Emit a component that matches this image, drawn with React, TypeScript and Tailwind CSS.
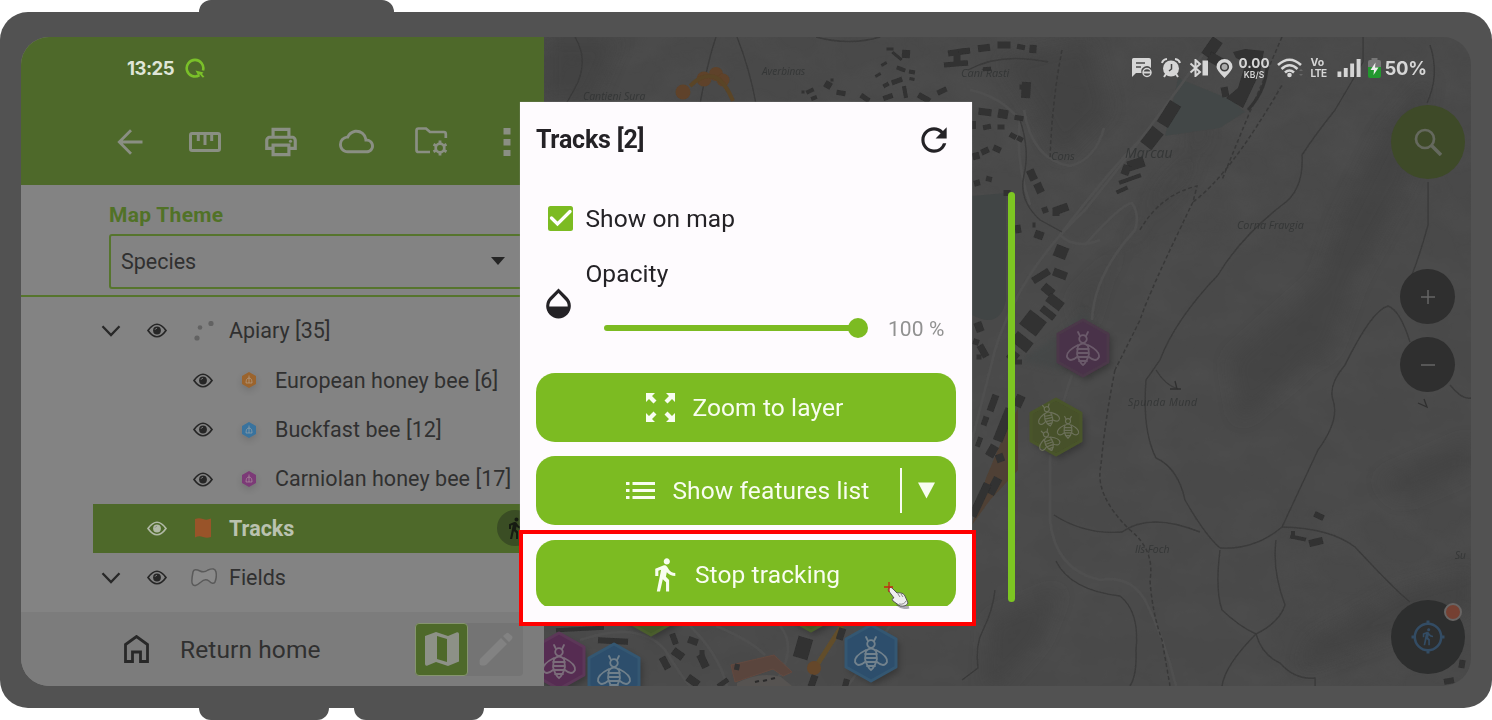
import type { ReactNode } from 'react';
import { MdCloudQueue, MdDirectionsWalk, MdOpacity, MdOutlinePrint, MdRefresh } from 'react-icons/md';

type Block = [number, number, number, number, number];

const buildings: Block[] = [
  [959, 52, 22, 6, -8], [956, 64, 24, 5, -5], [957, 58, 7, 8, 0], [906, 54, 8, 8, 5], [890, 49, 7, 3, 0],
  [897, 56, 12, 3, 40], [884, 64, 6, 3, -30], [878, 75, 6, 3, -30], [901, 69, 9, 4, 20], [897, 81, 11, 5, -20],
  [912, 72, 6, 4, 10], [886, 85, 6, 4, -30], [888, 97, 10, 5, -20], [905, 92, 4, 12, -10], [924, 98, 13, 6, 30],
  [942, 91, 10, 5, -25], [912, 79, 5, 3, 10], [828, 85, 7, 7, 30], [841, 93, 9, 5, 10], [810, 91, 8, 4, -25],
  [814, 98, 6, 4, -20], [865, 98, 10, 5, 35], [832, 80, 3, 3, 0], [803, 92, 3, 3, 0],
  [964, 51, 12, 5, -5], [963, 63, 9, 5, 0], [984, 48, 12, 7, -8], [1004, 45, 13, 7, 0], [1021, 47, 8, 5, 10],
  [1033, 49, 7, 8, 5], [987, 69, 8, 4, -5], [1026, 90, 9, 16, 3], [1022, 87, 5, 5, 0], [985, 112, 13, 7, 6],
  [1003, 114, 10, 9, 10], [1019, 118, 9, 5, 10], [987, 127, 8, 5, -10], [1001, 127, 7, 5, 0], [974, 125, 4, 8, 0],
  [1013, 136, 7, 5, 30], [1020, 139, 6, 5, 30], [976, 156, 7, 7, -15], [985, 151, 8, 6, -25], [997, 149, 8, 6, 25],
  [977, 183, 6, 6, -15], [989, 179, 6, 5, 15], [1032, 175, 8, 11, -25], [1039, 188, 8, 10, -25],
  [1045, 210, 6, 6, -20], [1061, 209, 15, 8, -20], [1056, 212, 7, 8, 0], [1018, 229, 6, 8, -10], [1039, 235, 9, 8, 20],
  [1034, 225, 3, 5, 0], [1007, 193, 7, 6, 0], [1061, 252, 13, 12, 22], [1041, 276, 19, 7, -32], [1060, 274, 14, 8, 20],
  [1048, 290, 12, 9, 40], [1055, 302, 17, 10, 38], [1048, 313, 16, 7, 38], [1033, 323, 21, 18, 38], [1022, 342, 20, 12, 38],
  [1013, 356, 10, 10, 38], [1169, 114, 13, 25, 32], [1152, 138, 14, 20, 38], [1136, 164, 17, 10, -18],
  [1130, 179, 23, 4, -20], [1122, 190, 12, 4, -25], [1126, 170, 8, 10, 20], [1212, 48, 12, 20, 35], [1216, 60, 16, 10, 30],
  [1225, 92, 7, 10, -10], [979, 327, 8, 10, -20], [976, 342, 6, 6, 20], [983, 351, 7, 13, -30], [979, 357, 5, 5, 0],
  [993, 403, 7, 17, 20], [985, 421, 6, 9, 20], [979, 442, 5, 10, 20], [1019, 401, 9, 12, 25], [1004, 425, 10, 34, 22],
  [992, 451, 9, 12, 30], [1000, 458, 8, 8, -20], [994, 486, 9, 18, 28], [980, 500, 8, 36, 25], [1018, 362, 8, 5, 0],
  [613, 641, 30, 6, 3], [665, 663, 7, 13, -28], [678, 654, 12, 8, 35], [693, 641, 10, 7, 20], [674, 639, 6, 11, -20],
  [703, 661, 8, 14, -25], [693, 681, 13, 8, 35], [702, 653, 5, 6, 0], [803, 648, 15, 21, 16], [841, 634, 7, 12, 18],
  [723, 683, 12, 5, -35], [813, 681, 7, 12, 20], [846, 683, 6, 8, 15], [737, 667, 5, 6, 10], [580, 629, 48, 4, -3],
  [1319, 516, 10, 6, 25], [1298, 538, 16, 4, 12], [1293, 535, 4, 8, 0], [1316, 542, 14, 7, -14], [1462, 664, 6, 8, 10],
  [1449, 681, 10, 6, -10],
];

const roads = [
  'M575 37 Q590 62 574 90 L566 104', 'M700 104 Q708 60 716 37', 'M737 37 Q750 70 756 104', 'M968 70 Q1000 52 1048 62',
  'M816 37 Q850 46 880 37', 'M1020 120 Q1030 150 1024 175 Q1018 200 1040 220 L1062 232',
  'M1363 37 V62 Q1350 85 1335 110 Q1315 135 1302 155 Q1304 190 1282 205 Q1240 238 1218 275 Q1175 320 1160 360 L1146 380 Q1142 430 1156 458 Q1178 468 1185 500 Q1205 535 1220 548',
  'M1428 182 V225 Q1420 255 1410 280', 'M1430 45 Q1440 75 1427 103', 'M1220 548 Q1255 550 1282 527 L1318 450 Q1340 420 1333 400 Q1328 385 1345 365 Q1372 310 1388 306 Q1400 310 1410 342',
  'M1282 527 Q1330 528 1355 547 Q1395 590 1410 602', 'M1220 550 Q1215 590 1222 610 Q1240 627 1256 634 Q1262 655 1280 663 Q1295 680 1315 678 V686',
  'M1054 515 Q1085 535 1122 532 Q1150 512 1200 532', 'M1056 561 Q1070 590 1120 596 Q1140 612 1136 650 Q1137 675 1130 686',
  'M1256 634 Q1225 665 1222 686', 'M1276 540 Q1272 570 1285 605 Q1280 622 1256 634', 'M1450 385 Q1462 400 1471 398',
  'M1156 370 Q1165 385 1178 389', 'M995 590 Q993 610 983 630 Q975 645 978 668 L962 680',
];

const dotted = [
  'M1062 50 Q1052 100 1050 160', 'M1140 230 Q1160 195 1197 186 L1193 202 Q1230 175 1282 85',
  'M1115 370 Q1105 420 1101 465 Q1094 495 1130 530 Q1155 550 1150 580 Q1152 612 1162 640 L1170 686',
  'M1193 202 Q1150 290 1140 320 Q1125 350 1115 370', 'M1282 37 Q1250 110 1222 180',
];

const paleRoads = [
  'M1215 37 Q1150 130 1085 210 Q1020 270 995 350 Q985 390 972 440', 'M1100 240 Q1075 250 1060 235 Q1110 170 1140 140',
  'M1092 320 Q1094 275 1135 230 Q1140 215 1132 203 Q1120 205 1085 245', 'M1050 455 V520 Q1055 570 1100 580 Q1130 575 1145 600 Q1165 640 1176 686',
  'M1024 110 Q1032 160 1070 166 Q1095 160 1104 128', 'M970 90 Q1000 96 1020 120 Q1015 160 1030 205',
  'M580 640 Q640 620 665 650 Q690 690 695 690', 'M690 626 Q720 655 728 690', 'M780 626 Q800 650 770 690', 'M890 626 L845 690',
  'M716 626 Q750 640 765 655', 'M1072 375 Q1060 410 1050 450',
];

const shades = [
  'M1385 130 L1430 75 L1410 180 L1355 280 L1330 350 L1290 370 L1340 220 Z', 'M1140 230 L1160 190 L1205 140 L1200 100 L1190 170 L1140 225 L1100 280 L1085 330 L1075 300 Z',
  'M1000 60 L1090 40 L1110 110 L1060 160 L1040 120 Z', 'M990 620 L1060 590 L1040 640 L1000 686 L985 686 Z', 'M1310 640 L1400 590 L1471 570 L1471 610 L1380 640 L1300 670 Z',
  'M1380 480 L1471 440 L1471 470 L1400 500 Z', 'M544 37 H620 L590 104 H544 Z', 'M1230 360 L1320 280 L1300 370 L1240 420 Z',
];

function Bee({ x, y, s, r = 0 }: { x: number; y: number; s: number; r?: number }) {
  return (
    <g transform={`translate(${x} ${y}) rotate(${r}) scale(${s})`} fill="none" strokeWidth="1.8" strokeLinecap="round">
      <path d="M-5 -16 -3 -12 M5 -16 3 -12" />
      <circle cx="0" cy="-9" r="3.8" />
      <path d="M-5 -2 Q0 -7 5 -2 L6 6 Q4 14 0 17 Q-4 14 -6 6 Z M-6 1 H6 M-6 5 H6 M-5.5 9 H5.5 M-4 13 H4" />
      <path d="M-5 -3 Q-17 3 -16 9 Q-13 15 -6 9 M5 -3 Q17 3 16 9 Q13 15 6 9" />
    </g>
  );
}

function Hex({ x, y, fill, edge, line, many = false }: { x: number; y: number; fill: string; edge: string; line: string; many?: boolean }) {
  return (
    <g stroke={line}>
      <path transform={`translate(${x + 3} ${y + 4})`} d="M0 -28 25 -14 V14 L0 28 -25 14 V-14 Z" fill="#000" opacity=".25" stroke="none" filter="url(#soft)" />
      <path transform={`translate(${x} ${y})`} d="M0 -28 25 -14 V14 L0 28 -25 14 V-14 Z" fill={fill} stroke={edge} strokeWidth="3" strokeLinejoin="round" />
      {many ? (
        <>
          <Bee x={x - 8} y={y - 12} s={0.66} r={-12} />
          <Bee x={x + 12} y={y} s={0.66} />
          <Bee x={x - 8} y={y + 13} s={0.66} r={-20} />
        </>
      ) : (
        <Bee x={x} y={y} s={1} />
      )}
    </g>
  );
}

function MapCanvas() {
  return (
    <svg className="block h-full w-full" viewBox="544 37 927 649">
      <defs>
        <filter id="soft" x="-30%" y="-30%" width="160%" height="160%"><feGaussianBlur stdDeviation="3" /></filter>
        <filter id="haze" x="-30%" y="-30%" width="160%" height="160%"><feGaussianBlur stdDeviation="9" /></filter>
        <filter id="edge"><feGaussianBlur stdDeviation="0.6" /></filter>
        <filter id="relief" x="0" y="0" width="100%" height="100%">
          <feTurbulence type="fractalNoise" baseFrequency="0.022 0.03" numOctaves="4" seed="7" />
          <feColorMatrix values="0 0 0 0 0.12  0 0 0 0 0.12  0 0 0 0 0.12  1.1 0 0 0 -0.38" />
        </filter>
      </defs>
      <rect x="544" y="37" width="927" height="649" fill="#494949" />
      <rect x="544" y="37" width="927" height="649" filter="url(#relief)" opacity=".28" />
      <g fill="#3d3d3d" opacity=".45" filter="url(#haze)">{shades.map((d) => <path key={d} d={d} />)}</g>
      <path d="M972 196 L1006 193 V300 Q1000 330 972 315 Z" fill="#414545" />
      <path d="M1178 78 L1232 100 L1245 112 L1220 128 L1165 136 Z" fill="#434746" filter="url(#edge)" />
      <path d="M1020 360 Q1070 330 1082 310 L1092 320 L1060 370 Z" fill="#3f4544" opacity=".5" filter="url(#soft)" />
      <g fill="none" stroke="#4f4f4f" strokeWidth="2.6" filter="url(#edge)">{paleRoads.map((d) => <path key={d} d={d} />)}</g>
      <g fill="none" stroke="#3a3a3a" strokeWidth="1.4" filter="url(#edge)">{roads.map((d) => <path key={d} d={d} />)}</g>
      <g fill="none" stroke="#383838" strokeWidth="1.5" strokeDasharray="4 2.5" filter="url(#edge)">{dotted.map((d) => <path key={d} d={d} />)}</g>
      <g filter="url(#edge)">
        <g fill="#5e4229">
          <circle cx="683" cy="92" r="7.5" />
          <circle cx="704" cy="79" r="7.5" />
          <circle cx="716" cy="74" r="7" />
          <circle cx="723" cy="80" r="6.5" />
        </g>
        <path d="M690 86 Q716 60 733 101" fill="none" stroke="#5a4428" strokeWidth="4" />
        <path d="M972 525 L986 478 L1002 440 L1018 408 L1018 470 L990 500 Z" fill="#4f4034" />
        <path d="M842 626 L815 668" stroke="#624e2a" strokeWidth="5" />
        <circle cx="814" cy="668" r="7" fill="#65472a" />
        <path d="M731 665 L774 655 L792 672 L783 676 L773 669 L735 682 Z" fill="#5a453e" stroke="#63493f" />
        <path d="M737 683 Q760 671 781 677 L792 686 H737 Z" fill="#565351" />
        <path d="M755 682 l4 -1 m4 0 l4 -1 m4 -1 l4 -1" stroke="#2a2a2a" strokeWidth="2" />
        <g fill="#303030">
          {buildings.map(([x, y, w, h, a], i) => (
            <rect key={i} x={x - w / 2} y={y - h / 2} width={w} height={h} transform={`rotate(${a} ${x} ${y})`} />
          ))}
          <path d="M1233 52 L1245 49 L1264 51 L1260 72 L1243 108 L1226 98 L1238 88 L1246 62 L1236 58 Z" />
        </g>
        <path d="M1267 62 Q1268 88 1248 110" fill="none" stroke="#333" strokeWidth="3" />
      </g>
      <g fill="#303232" fontFamily="'Open Sans', sans-serif" fontStyle="italic" fontSize="11" fillOpacity=".8">
        <text x="1051" y="160">Cons</text>
        <text x="1125" y="158" fontSize="14">Marcau</text>
        <text x="1237" y="229" fontSize="10.8">Corna Fravgia</text>
        <text x="1128" y="406" fontSize="10.5" letterSpacing=".4">Spunda Mund</text>
        <text x="1135" y="553" fontSize="10.5">Ils Foch</text>
        <text x="762" y="75" fontSize="10">Averbinas</text>
        <text x="961" y="77" fontSize="11">Cani Rasti</text>
        <text x="583" y="100" fontSize="10.5">Cantieni Sura</text>
        <text x="1455" y="559" fontSize="10">Su</text>
      </g>
      <path d="M1170 389 h11 m-6 -8 l2 8 M1418 403 l9 4 l-3 -8" stroke="#303030" fill="none" strokeWidth="1.3" />
      <g filter="url(#edge)">
        <Hex x={1083} y={348} fill="#493248" edge="#4b3749" line="#6b5a6b" />
        <Hex x={1056} y={427} fill="#465129" edge="#4a552b" line="#6c705a" many />
      </g>
      <Hex x={559} y={661} fill="#562c52" edge="#5c3758" line="#7b6c7a" />
      <Hex x={614} y={672} fill="#2d4e6c" edge="#345772" line="#70808b" />
      <Hex x={871} y={653} fill="#2d4e6c" edge="#345772" line="#72828d" />
      <Hex x={651} y={607} fill="#455829" edge="#4a5d2c" line="#75795f" />
      <Hex x={811} y={603} fill="#455829" edge="#4a5d2c" line="#75795f" />
    </svg>
  );
}

function Eye({ light = false }: { light?: boolean }) {
  return (
    <svg className={light ? 'h-[15px] w-5 text-[#b0b9a5]' : 'h-[15px] w-5 text-[#262626]'} viewBox="0 0 20 15" fill="none" stroke="currentColor">
      <path d="M1 7.5 Q10 -5 19 7.5 Q10 20 1 7.5 Z" strokeWidth="1.7" />
      <circle cx="10" cy="7.5" r="3.9" fill="currentColor" stroke="none" />
      <path d="M8 6.8 q.5-1.5 2-1.5" stroke="#888" strokeWidth=".8" />
    </svg>
  );
}

function Chevron() {
  return (
    <svg className="h-3 w-5" viewBox="0 0 20 12" fill="none" stroke="#282828" strokeWidth="2.3"><path d="M1.5 1.2 10 10 18.5 1.2" /></svg>
  );
}

function Swatch({ color }: { color: string }) {
  return (
    <svg className="h-5 w-5 drop-shadow-md" viewBox="0 0 20 20">
      <path d="M10 2 17 6 V14 L10 18 3 14 V6 Z" style={{ fill: color }} />
      <path d="M10 5.500 v2.500 M7 13 q0-5 3-5 t3 5 Z M10 8 v5" fill="none" stroke="#bdb5ae" strokeOpacity=".5" strokeWidth="1" />
    </svg>
  );
}

function GroupRow({ icon, label, labelClass }: { icon: ReactNode; label: string; labelClass: string }) {
  return (
    <div className="flex h-[49.4px] items-center pl-[80px]">
      <Chevron />
      <div className="ml-[26px] flex"><Eye /></div>
      <div className="ml-[22px] flex w-[30px] justify-center">{icon}</div>
      <span className={labelClass}>{label}</span>
    </div>
  );
}

function SpeciesRow({ color, label, labelClass }: { color: string; label: string; labelClass: string }) {
  return (
    <div className="flex h-[49.4px] items-center pl-[172px]">
      <Eye />
      <div className="ml-[26px] flex"><Swatch color={color} /></div>
      <span className={labelClass}>{label}</span>
    </div>
  );
}

function Tool({ children }: { children: ReactNode }) {
  return <div className="flex w-[75.5px] shrink-0 items-center justify-center text-[#8a8f83]">{children}</div>;
}

function SidePanel() {
  return (
    <aside className="flex h-full w-[523px] shrink-0 flex-col overflow-hidden bg-[#838383] text-[#303030]">
      <header className="flex h-[148px] shrink-0 flex-col bg-[#4e692a]">
        <div className="flex h-[62px] items-center pl-[106px]">
          <span className="w-[58px] font-['Inter'] text-[18.5px] leading-none font-bold tracking-[-0.5px] text-[#dfe5d8]">13:25</span>
          <svg className="h-5 w-5" viewBox="0 0 20 20" fill="none" stroke="#7ac029" strokeWidth="2.6">
            <path d="M14.5 17.200 A8.300 8.300 0 1 1 18 12.500" />
            <path d="M10.500 12.500 18.500 14.500 17 16 19.500 19 17.500 19.500 15 16.500 13 17 Z" fill="#7ac029" stroke="none" />
          </svg>
        </div>
        <div className="flex h-[87px] items-center pl-[71px]">
          <Tool>
            <svg className="h-[26px] w-[26px]" viewBox="0 0 26 26" fill="none" stroke="currentColor" strokeWidth="2.8"><path d="M25.500 13 H2.500 M14 1.300 2.300 13 14 24.700" /></svg>
          </Tool>
          <Tool>
            <svg className="h-[20px] w-[32px]" viewBox="0 0 32 20" fill="none" stroke="currentColor" strokeWidth="3"><rect x="1.500" y="1.500" width="29" height="17" rx="1.500" /><path d="M9.300 2 V9 M16 2 V13 M22.700 2 V9" /></svg>
          </Tool>
          <Tool><MdOutlinePrint className="h-[38px] w-[38px]" /></Tool>
          <Tool><MdCloudQueue className="h-[35px] w-[35px]" /></Tool>
          <Tool>
            <svg className="h-[29px] w-[33px]" viewBox="0 0 33 29" fill="none" stroke="currentColor" strokeWidth="2.700">
              <path d="M15 25 H3.500 Q1.500 25 1.500 23 V3.500 Q1.500 1.500 3.500 1.500 H11 L15 5 H29 Q30.800 5 30.800 7 V11" />
              <circle cx="25" cy="21" r="4.300" />
              <path d="M25 13.500 v3 M25 25.500 v3 M18.500 17.200 l2.600 1.500 M28.900 23.300 l2.600 1.500 M18.500 24.800 l2.600 -1.500 M28.900 18.700 l2.600 -1.500" strokeWidth="2.800" />
            </svg>
          </Tool>
          <Tool>
            <svg className="h-[28px] w-2" viewBox="0 0 8 28" fill="currentColor"><path d="M.5 0h7v6.500h-7zM.5 11h7v6.500h-7zM.5 22h7v6h-7z" /></svg>
          </Tool>
        </div>
      </header>
      <section className="h-[112px] shrink-0 border-b-2 border-[#56752d] pt-[20px] pl-[88px]">
        <div className="h-[28.5px] font-['Roboto'] text-[21px] leading-[20px] font-bold tracking-[0.3px] text-[#517227]">Map Theme</div>
        <div className="flex h-[55px] w-[460px] items-center rounded-[3px] border-2 border-[#56752d] pl-[10px]">
          <span className="w-[370px] pt-px font-['Roboto'] text-[21.5px] leading-none">Species</span>
          <svg className="h-2 w-[14px]" viewBox="0 0 14 8"><path d="M0 0H14L7 8Z" fill="#252525" /></svg>
        </div>
      </section>
      <div className="flex h-[315px] shrink-0 flex-col pt-[9.2px] font-['Roboto'] text-[21.5px] leading-none whitespace-nowrap">
        <GroupRow
          label="Apiary [35]"
          labelClass="ml-[10px]"
          icon={<svg className="h-5 w-[22px]" viewBox="0 0 22 20" fill="#626262"><circle cx="4" cy="17" r="2.600" /><circle cx="7" cy="6.500" r="2.300" /><circle cx="18" cy="2.500" r="2.600" /></svg>}
        />
        <SpeciesRow color="#9b642d" label="European honey bee [6]" labelClass="ml-[16px] tracking-[0.05px]" />
        <SpeciesRow color="#39739e" label="Buckfast bee [12]" labelClass="ml-[16px] tracking-[0.05px]" />
        <SpeciesRow color="#7c3a77" label="Carniolan honey bee [17]" labelClass="ml-[16px] tracking-[0.05px]" />
        <div className="ml-[72px] flex h-[49.4px] shrink-0 items-center bg-[#4e692a] pl-[54px] text-[#bac2b0]">
          <Eye light />
          <svg className="ml-[28px] h-5 w-4" viewBox="0 0 16 20"><path d="M0 1 Q4-.5 8 1 T16 .5 V19 Q12 20.500 8 19 T0 19.500 Z" fill="#995429" /></svg>
          <span className="ml-[18px] w-[268px] font-bold">Tracks</span>
          <div className="flex h-[36px] w-[36px] shrink-0 items-center justify-center rounded-full bg-[#3a4d24] text-[#161b12]"><MdDirectionsWalk className="h-6 w-6" /></div>
        </div>
        <GroupRow
          label="Fields"
          labelClass="ml-[10px]"
          icon={<svg className="h-[19px] w-[26px]" viewBox="0 0 26 19"><path d="M2 4 Q3 0 9 3 Q13 5 17 2 Q24-1 25 4 Q26 9 24 14 Q22 17 18 13 Q14 10 10 14 Q3 20 1.500 16 Q0 14 2 4 Z" fill="#8a8a8a" stroke="#5a5a5a" strokeWidth="1.500" /></svg>}
        />
      </div>
      <footer className="flex h-[74px] shrink-0 items-center bg-[#7c7c7c] pl-[103px]">
        <svg className="h-[28px] w-[25px]" viewBox="0 0 25 28" fill="none" stroke="#282828" strokeWidth="2.800"><path d="M1.500 26.500 V9.500 L12.500 1.500 23.500 9.500 V26.500 H16.500 V17 H8.500 V26.500 Z" /></svg>
        <span className="ml-[31px] w-[235px] pt-[3px] font-['Roboto'] text-[24.5px] leading-none tracking-[0.1px] whitespace-nowrap">Return home</span>
        <div className="flex h-[53px] rounded-[4px] bg-[#747474]">
          <div className="flex w-[53px] items-center justify-center rounded-[4px] border border-[#86956f] bg-[#4e692a]">
            <svg className="h-[34px] w-[34px]" viewBox="0 0 34 34" fill="#8d9187"><path d="M0 4 L11 0 L23 4 L32 .3 Q34 0 34 2 V29.500 L23 34 L11 30 L2 33.700 Q0 34 0 32 Z" /><path d="M12 4 22 7 V30 L12 27 Z" fill="#4e692a" /></svg>
          </div>
          <div className="flex w-[55px] items-center justify-center">
            <svg className="h-[34px] w-[34px]" viewBox="0 0 34 34" fill="#828282"><path d="M1 27 22 6 28 12 7 33 Q4 34 1 33 Q0 30 1 27 Z M24 4 27 1.500 Q28.500 0 30 1.500 L33 4 Q34 5.500 33 7 L30 10 Z" /></svg>
          </div>
        </div>
      </footer>
    </aside>
  );
}

function StatusIcons() {
  return (
    <div className="absolute top-[20px] right-[44.5px] flex h-[22px] items-center font-['Inter'] text-[#d6d6d6]">
      <svg className="h-5 w-5" viewBox="0 0 20 20"><path d="M0 1.500 Q0 0 1.500 0 H17 Q19 0 19 2 V10 A5.500 5.500 0 0 0 9.500 15 H4 L0 19 Z" fill="currentColor" /><path d="M4 5 H13 M4 9 H9" stroke="#4a4a4a" strokeWidth="1.500" /><circle cx="15" cy="14.500" r="4" fill="#484848" stroke="currentColor" strokeWidth="1.500" /><path d="M11 14.500 H19" stroke="currentColor" strokeWidth="2" /></svg>
      <svg className="ml-[9px] h-5 w-5" viewBox="0 0 20 20" fill="none" stroke="currentColor"><circle cx="10" cy="10.500" r="8" fill="currentColor" stroke="none" /><path d="M1 5 Q2 1.500 6 1 M19 5 Q18 1.500 14 1 M5 16 3 19 M15 16 17 19" strokeWidth="2" /><path d="M10.500 6 V11 L8 13" stroke="#444" strokeWidth="1.500" /></svg>
      <svg className="ml-[8px] h-[18px] w-5" viewBox="0 0 20 18" fill="none" stroke="currentColor" strokeWidth="2"><path d="M1.500 4.500 11 13 6.500 17 V1 L11 5 1.500 13.500" /><path d="M13.500 1.500 H19 V16.500 H13.500 Z" fill="currentColor" stroke="none" /></svg>
      <svg className="ml-[7px] h-[19px] w-[17px]" viewBox="0 0 17 19"><path d="M8.500 0 A8 8 0 0 1 16.500 8 Q16.500 11 8.500 19 Q.5 11 .5 8 A8 8 0 0 1 8.500 0 Z" fill="currentColor" /><circle cx="8.500" cy="8" r="3.800" fill="#aaa" stroke="#3c3c3c" strokeWidth="1.600" /></svg>
      <div className="ml-[6px] flex w-[31px] flex-col items-center font-bold"><span className="text-[13.5px] leading-[14px]">0.00</span><span className="text-[8.5px] leading-[10px] font-semibold">KB/S</span></div>
      <svg className="ml-[7px] h-[20px] w-[26px]" viewBox="0 0 26 20" fill="none" stroke="currentColor" strokeWidth="2.600"><path d="M1 7 Q12.500 -3.500 24 7 M4.500 11 Q12.500 3.500 20.500 11 M8 14.500 Q12.500 10.500 17 14.500" /><circle cx="12.500" cy="17" r="2.300" fill="currentColor" stroke="none" /><path d="M22 13 l2-2 2 2Z M22 16 l2 2 2-2Z" fill="#666" stroke="none" /></svg>
      <div className="ml-[8px] flex w-[18px] flex-col font-bold"><span className="text-[10.5px] leading-[10px]">Vo</span><span className="text-[10px] leading-[11px] tracking-[-0.5px]">LTE</span></div>
      <svg className="ml-[8px] h-[18px] w-6" viewBox="0 0 24 18" fill="currentColor"><path d="M.5 12.500h3.800v5.500H.5zM6.800 9h3.900v9H6.800zM13.200 4.500h3.900v13.500h-3.900zM19.600 0h4v18h-4z" /></svg>
      <svg className="ml-[7px] h-[20px] w-[13px]" viewBox="0 0 13 20"><path d="M3.500 2 V0 H9.500 V2 H11 Q13 2 13 4 V9 H0 V4 Q0 2 2 2 Z" fill="#777" /><path d="M0 9 H13 V18 Q13 20 11 20 H2 Q0 20 0 18 Z" fill="#22982e" /><path d="M7.500 4.500 2.500 12 H6 L5.500 17 10.500 9.500 H7 Z" fill="#eee" /></svg>
      <span className="ml-[4px] w-[42px] pt-px text-[18.5px] leading-none font-bold tracking-[-0.3px] whitespace-nowrap">50%</span>
    </div>
  );
}

function MapControls() {
  return (
    <div className="absolute top-0 right-[6px] flex h-full w-[75px] flex-col items-center text-[#666]">
      <div className="mt-[68px] flex h-[74px] w-[74px] items-center justify-center rounded-full bg-[#3e4a28]">
        <svg className="h-7 w-7" viewBox="0 0 28 28" fill="none" stroke="#65695e" strokeWidth="2.7"><circle cx="11" cy="11" r="9" /><path d="M17.500 17.500 27 27" strokeWidth="3.500" /></svg>
      </div>
      <div className="mt-[90px] flex h-[55px] w-[55px] items-center justify-center rounded-full bg-[#2f2f2f]">
        <svg className="h-4 w-4" viewBox="0 0 16 16" stroke="currentColor" strokeWidth="1.500"><path d="M8 1V15M1 8H15" /></svg>
      </div>
      <div className="mt-[13px] flex h-[55px] w-[55px] items-center justify-center rounded-full bg-[#2f2f2f]">
        <svg className="h-4 w-4" viewBox="0 0 16 16" stroke="currentColor" strokeWidth="1.500"><path d="M1 8H15" /></svg>
      </div>
      <div className="relative mt-[207.5px] flex h-[74px] w-[74px] items-center justify-center rounded-full bg-[#2d2e2e] text-[#334c64]">
        <svg className="absolute h-[34px] w-[34px]" viewBox="0 0 34 34" fill="none" stroke="currentColor" strokeWidth="2.500"><circle cx="17" cy="17" r="13.200" /><path d="M17 .5V5M17 29v4.500M.5 17H5M29 17h4.500" strokeWidth="3" /></svg>
        <MdDirectionsWalk className="h-[19px] w-[19px]" />
        <div className="absolute top-[3px] right-[3px] h-[18px] w-[18px] rounded-full border-2 border-[#686564] bg-[#754032]" />
      </div>
    </div>
  );
}

function Dialog() {
  return (
    <div className="absolute top-[65px] left-[499.4px] flex h-[521px] w-[451.4px] flex-col bg-[#fefbfe] px-[15.5px] font-['Roboto'] text-[#242226] shadow-[0_0_1px_#999]">
      <div className="flex h-[75px] shrink-0 items-center justify-between pr-[3px]">
        <h2 className="text-[25px] leading-none font-bold tracking-[-0.2px]">Tracks [2]</h2>
        <MdRefresh className="h-[38px] w-[38px]" />
      </div>
      <div className="mt-[27px] flex h-[28px] shrink-0 items-center pl-[12px]">
        <svg className="h-[25px] w-[25px]" viewBox="0 0 25 25"><rect width="25" height="25" rx="2.500" fill="#7cbb22" /><path d="M3.500 12 9.500 18 22 5.500" fill="none" stroke="#fff" strokeWidth="3.300" strokeLinecap="round" /></svg>
        <span className="ml-[12.5px] pt-[2px] text-[24.5px] leading-none tracking-[0.1px]">Show on map</span>
      </div>
      <div className="mt-[16px] flex h-[105px] shrink-0 pl-[4px]">
        <div className="w-[45.5px] pt-[37px]"><MdOpacity className="h-[37px] w-[37px]" /></div>
        <div className="flex flex-1 flex-col">
          <div className="flex h-[53px] shrink-0 items-center"><span className="text-[24.5px] leading-none tracking-[0.1px]">Opacity</span></div>
          <div className="mt-[2px] flex h-[50px] shrink-0 items-center pl-[19px]">
            <div className="h-[6px] w-[246px] rounded-l-full bg-[#7cbb22]" />
            <div className="-ml-[2px] h-5 w-5 shrink-0 rounded-full bg-[#7cbb22]" />
            <span className="ml-[19.5px] pt-[3px] text-[21px] leading-none tracking-[0.1px] whitespace-nowrap text-[#919191]">100 %</span>
          </div>
        </div>
      </div>
      <div className="mt-[19.5px] flex flex-col gap-[14.5px] text-[24.5px] leading-none tracking-[0.12px] text-[#f8fdf0]">
        <div className="flex h-[69px] items-center rounded-[19px] bg-[#7cbb22] pl-[110.5px]">
          <svg className="h-[29px] w-[29px]" viewBox="0 0 29 29" fill="currentColor"><path d="M0 0H9L6 3 10.500 7.500 7.500 10.500 3 6 0 9ZM29 0V9L26 6 21.500 10.500 18.500 7.500 23 3 20 0ZM0 29V20L3 23 7.500 18.500 10.500 21.500 6 26 9 29ZM29 29H20L23 26 18.500 21.500 21.500 18.500 26 23 29 20Z" /></svg>
          <span className="ml-[17px] pt-[2px]">Zoom to layer</span>
        </div>
        <div className="flex h-[69px] items-center rounded-[19px] bg-[#7cbb22] pl-[90.5px]">
          <svg className="h-[17px] w-[29px]" viewBox="0 0 29 17" fill="currentColor"><path d="M0 0h3.500v3H0zM0 7h3.500v3H0zM0 14h3.500v3H0zM6.500 0H29v3H6.500zM6.500 7H29v3H6.500zM6.500 14H29v3H6.500z" /></svg>
          <span className="ml-[17px] w-[228px] pt-[2px]">Show features list</span>
          <div className="h-[45px] w-[2px] bg-[#f8fdf0]" />
          <svg className="ml-[15.5px] h-[17px] w-[17px]" viewBox="0 0 18 17" fill="currentColor"><path d="M0 0H18L9 17Z" /></svg>
        </div>
        <div className="h-[66.5px] overflow-hidden">
          <div className="flex h-[69px] items-center rounded-[19px] bg-[#7cbb22] pl-[110px]">
            <MdDirectionsWalk className="h-[37px] w-[37px]" />
            <span className="ml-[12px] pt-[2px]">Stop tracking</span>
          </div>
        </div>
      </div>
    </div>
  );
}

export default function App() {
  return (
    <div className="relative flex h-[720px] w-[1492px] flex-col overflow-hidden bg-white">
      <div className="ml-[199px] h-3 w-[195px] rounded-t-[12px] bg-[#525252]" />
      <div className="h-[696px] rounded-[28px] bg-[#525252] px-[21px] pt-[25px]">
        <div className="relative h-[649px] w-[1450px]">
          <div className="relative flex h-full overflow-hidden rounded-[28px]">
            <SidePanel />
            <div className="relative min-w-0 flex-1">
              <MapCanvas />
              <StatusIcons />
              <MapControls />
              <div className="absolute top-[155px] left-[464px] h-[410px] w-[6.5px] rounded-full bg-[#7dc622]" />
            </div>
          </div>
          <Dialog />
          <div className="absolute top-[493px] left-[497.5px] h-[96px] w-[457px] border-[4.5px] border-[#ff0000]" />
          <svg className="absolute top-[544px] left-[862px] h-[28px] w-[28px]" viewBox="0 0 28 28">
            <path d="M14 23 Q20 28 26 26" stroke="#334" strokeWidth="3" opacity=".4" fill="none" />
            <path d="M6 7 Q8 5 10 8 L14 12 Q20 11 22 15 L25 22 Q23 26 17 25 L10 20 Q8 17 11 17 L5 9 Z" fill="#eee" stroke="#555" strokeWidth="1" />
            <path d="M15 13 l2 3 M18 13 l2 3 M16 23 q5 1 7-3" stroke="#888" fill="none" />
            <path d="M6 1 V11 M1 6 H10" stroke="#c12b12" strokeWidth="1.300" />
          </svg>
        </div>
      </div>
      <div className="flex gap-[25px] pl-[199px]">
        <div className="h-3 w-[130px] rounded-b-[12px] bg-[#525252]" />
        <div className="h-3 w-[130px] rounded-b-[12px] bg-[#525252]" />
      </div>
    </div>
  );
}
